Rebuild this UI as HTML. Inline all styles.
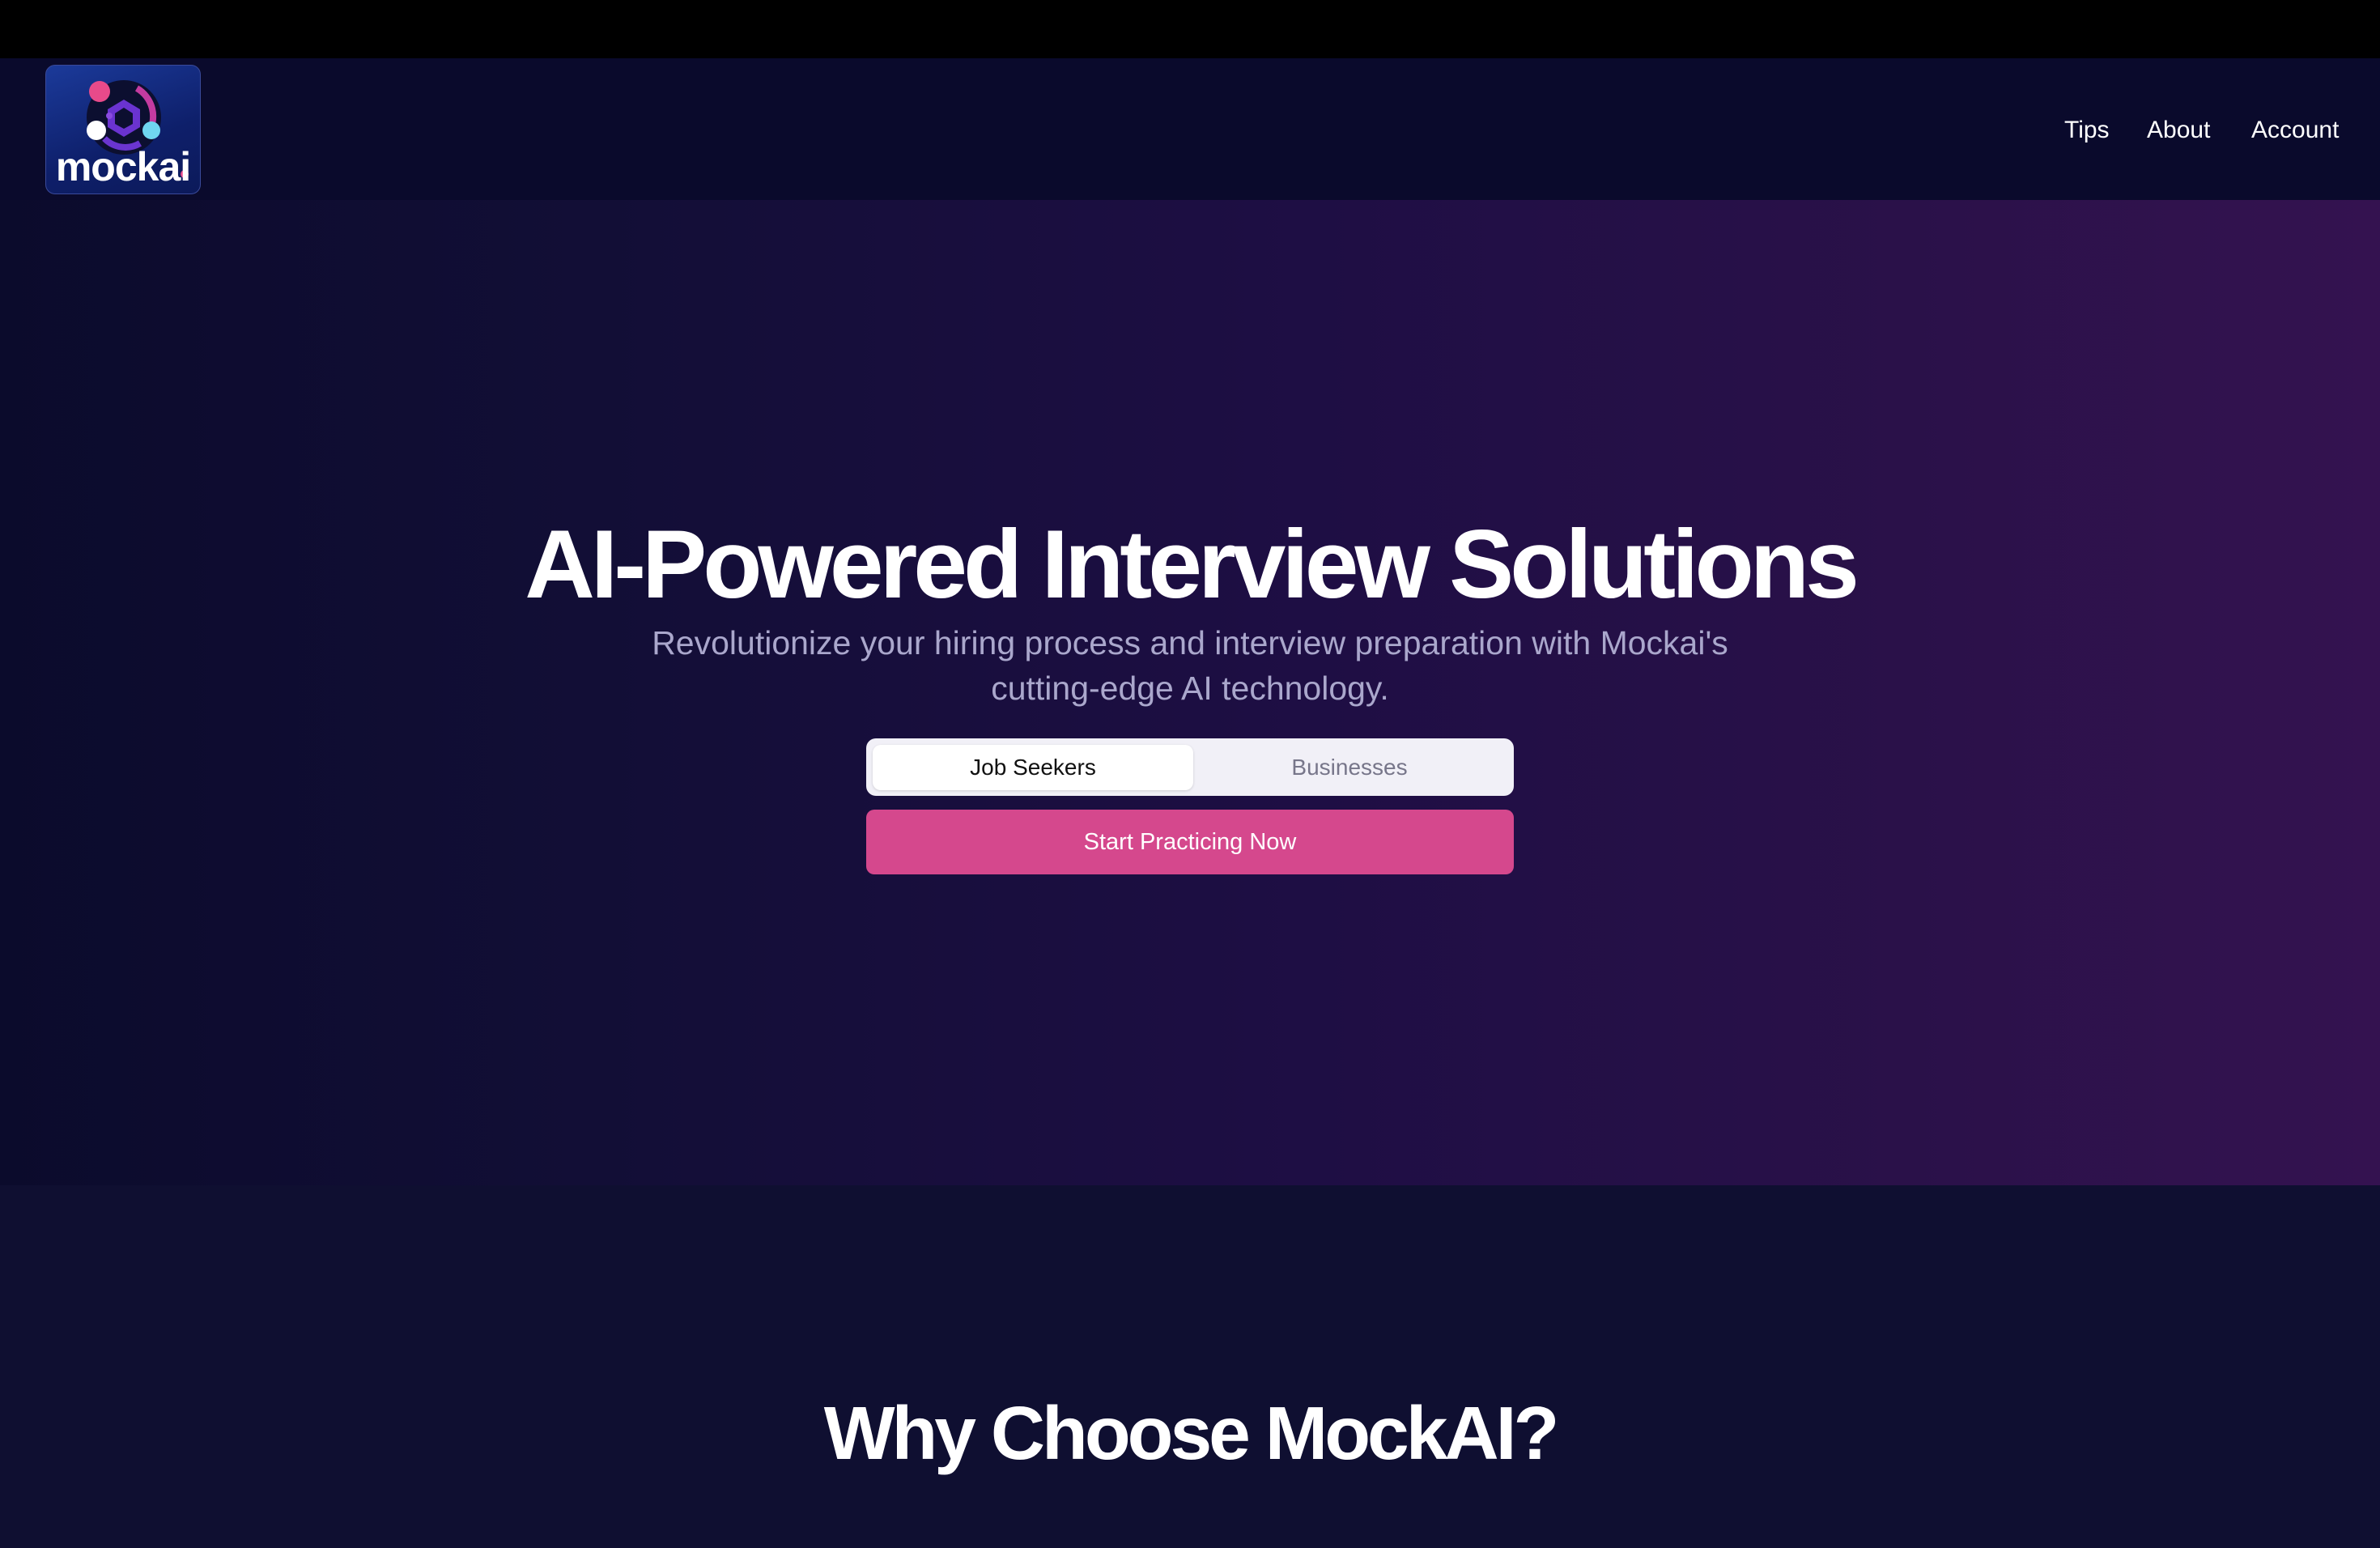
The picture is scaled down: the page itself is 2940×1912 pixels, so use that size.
<!DOCTYPE html>
<html><head><meta charset="utf-8">
<style>
*{margin:0;padding:0;box-sizing:border-box}
html,body{width:2940px;height:1912px;overflow:hidden;background:#0f0f31;font-family:"Liberation Sans",sans-serif}
.top{position:absolute;left:0;top:0;width:2940px;height:72px;background:#000}
.hdr{position:absolute;left:0;top:72px;width:2940px;height:175px;background:#0a0a2c}
.logo{position:absolute;left:56px;top:80px;width:192px;height:160px;border-radius:12px;background:linear-gradient(160deg,#1b3a9a,#0e1f6a 60%,#0c1a5a);border:1px solid #3a4a9a;overflow:hidden}
.logo .t{position:absolute;left:0;width:100%;top:96px;text-align:center;color:#fff;font-weight:bold;font-size:50px;letter-spacing:-1px}
.nav{position:absolute;top:144px;color:#fff;font-size:30px}
.hero{position:absolute;left:0;top:247px;width:2940px;height:1217px;background:linear-gradient(90deg,#0b0b2c 0%,#120e36 25%,#1e0e44 55%,#2a1149 80%,#341250 100%)}
h1{position:absolute;left:0;width:2940px;top:622px;text-align:center;color:#fff;font-size:120px;font-weight:bold;letter-spacing:-5px;line-height:150px}
.sub{position:absolute;left:0;width:2940px;top:766px;text-align:center;color:#aaa7cc;font-size:41px;line-height:56px}
.tog{position:absolute;left:1070px;top:912px;width:800px;height:71px;background:#f1f0f7;border-radius:12px}
.tog .a{position:absolute;left:8px;top:8px;width:396px;height:56px;background:#fff;border-radius:10px;box-shadow:0 1px 3px rgba(0,0,0,.15);text-align:center;line-height:56px;font-size:28px;color:#111}
.tog .b{position:absolute;left:404px;top:8px;width:386px;height:56px;text-align:center;line-height:56px;font-size:28px;color:#77768a}
.btn{position:absolute;left:1070px;top:1000px;width:800px;height:80px;background:#d5488d;border-radius:10px;color:#fff;text-align:center;line-height:80px;font-size:29px}
h2{position:absolute;left:0;width:2940px;top:1710px;text-align:center;color:#fff;font-size:93px;font-weight:bold;letter-spacing:-4px;line-height:120px}
</style></head><body>
<div class="top"></div>
<div class="hdr"></div>
<div class="logo">
<svg width="192" height="160" viewBox="0 0 192 160" style="position:absolute;left:0;top:0">
<circle cx="96" cy="64" r="46" fill="#0c0f30"/>
<path d="M112 28 A40 40 0 0 1 126 84" stroke="#c43ba0" stroke-width="8" fill="none"/>
<path d="M72 90 A36 36 0 0 0 116 96" stroke="#6a35d0" stroke-width="8" fill="none"/>
<polygon points="96,42 116,54 116,76 96,88 76,76 76,54" fill="#6a33d0"/>
<polygon points="96,52 107,59 107,72 96,78 85,72 85,59" fill="#0c0f30"/>
<circle cx="66" cy="32" r="13" fill="#e84a8a"/>
<circle cx="62" cy="80" r="12" fill="#fff"/>
<circle cx="130" cy="80" r="11" fill="#6fd6f0"/>
<circle cx="78" cy="62" r="4" fill="#8a4be0"/>
<circle cx="171" cy="134" r="5" fill="#e84a8a"/>
</svg>
<div class="t">mockai</div>
</div>
<div class="nav" style="left:2550px">Tips</div>
<div class="nav" style="left:2652px">About</div>
<div class="nav" style="left:2781px">Account</div>
<div class="hero"></div>
<h1>AI-Powered Interview Solutions</h1>
<div class="sub">Revolutionize your hiring process and interview preparation with Mockai's<br>cutting-edge AI technology.</div>
<div class="tog"><div class="a">Job Seekers</div><div class="b">Businesses</div></div>
<div class="btn">Start Practicing Now</div>
<h2>Why Choose MockAI?</h2>
</body></html>
